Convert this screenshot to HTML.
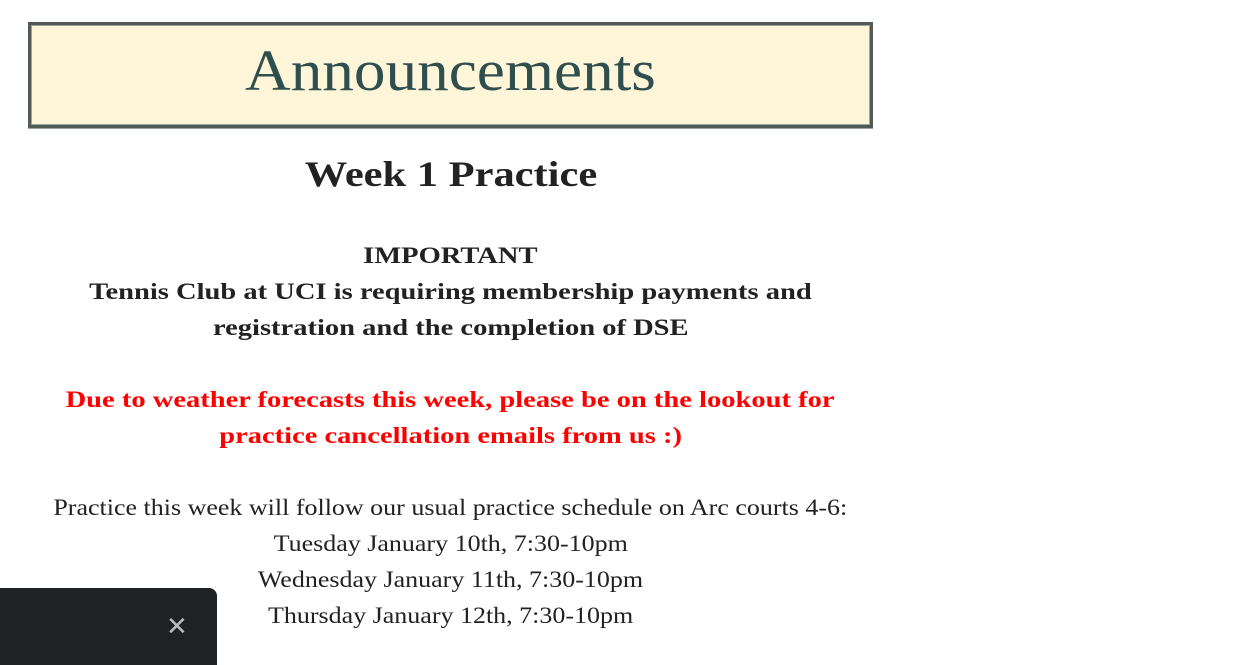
<!DOCTYPE html>
<html><head><style>
body{margin:0;background:#fff;font-family:"Liberation Serif",serif;color:#222;}
.box{position:absolute;left:28px;top:22px;width:839px;height:100px;background:#fff5d8;border:3px solid #515a55;box-shadow:inset 0 0 0 1px #9aa79d, 0 1px 0 #9aa79d;text-align:center;}
.box h1{margin:0;font-weight:normal;font-size:58px;line-height:92px;color:#2f4f4f;display:inline-block;transform:scaleX(1.09);}
.c{position:absolute;left:28px;width:845px;text-align:center;}
.l{position:absolute;left:28px;width:845px;text-align:center;font-size:23px;line-height:36px;white-space:nowrap;}
.l span{display:inline-block;}
.b span{font-weight:bold;transform:scaleX(1.24);}
.n span{transform:scaleX(1.13);}
h2{margin:0;font-size:36px;line-height:40px;display:inline-block;transform:scaleX(1.18);}
.toast{position:absolute;left:0;top:588px;width:217px;height:77px;background:#202124;border-radius:0 8px 0 0;}
.toast span{position:absolute;left:166px;top:24px;color:#bbb;font-family:"DejaVu Sans",sans-serif;font-size:26px;line-height:30px;}
</style></head><body>
<div class="box"><h1>Announcements</h1></div>
<div class="c" style="top:154px"><h2>Week 1 Practice</h2></div>
<div class="l b" style="top:238px"><span>IMPORTANT</span></div>
<div class="l b" style="top:274px"><span>Tennis Club at UCI is requiring membership payments and</span></div>
<div class="l b" style="top:310px"><span>registration and the completion of DSE</span></div>
<div class="l b" style="top:382px;color:#f00"><span>Due to weather forecasts this week, please be on the lookout for</span></div>
<div class="l b" style="top:418px;color:#f00"><span>practice cancellation emails from us :)</span></div>
<div class="l n" style="top:490px"><span>Practice this week will follow our usual practice schedule on Arc courts 4-6:</span></div>
<div class="l n" style="top:526px"><span>Tuesday January 10th, 7:30-10pm</span></div>
<div class="l n" style="top:562px"><span>Wednesday January 11th, 7:30-10pm</span></div>
<div class="l n" style="top:598px"><span>Thursday January 12th, 7:30-10pm</span></div>
<div class="toast"><span>✕</span></div>
</body></html>
